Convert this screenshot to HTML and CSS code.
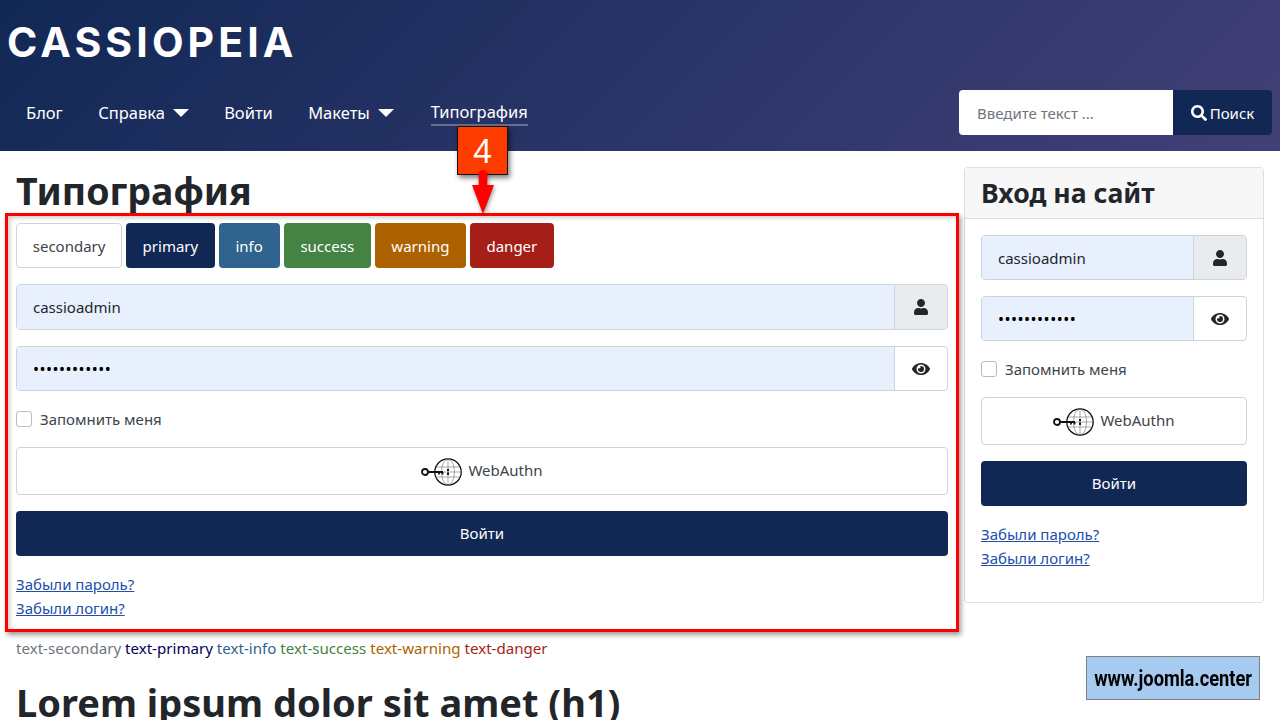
FILE: index.html
```html
<!DOCTYPE html>
<html lang="ru">
<head>
<meta charset="utf-8">
<title>Типография</title>
<link rel="stylesheet" href="styles.css">
</head>
<body>
<svg class="defs" width="0" height="0" aria-hidden="true">
  <symbol id="i-user" viewBox="0 0 448 512"><path d="M224 256c70.7 0 128-57.3 128-128S294.7 0 224 0 96 57.3 96 128s57.3 128 128 128zm89.6 32h-16.7c-22.2 10.2-46.9 16-72.9 16s-50.6-5.8-72.9-16h-16.7C60.2 288 0 348.2 0 422.4V464c0 26.5 21.5 48 48 48h352c26.5 0 48-21.5 48-48v-41.6c0-74.2-60.2-134.4-134.4-134.4z"/></symbol>
  <symbol id="i-eye" viewBox="0 0 576 512"><path d="M572.52 241.4C518.29 135.59 410.93 64 288 64S57.68 135.64 3.48 241.41a32.35 32.35 0 0 0 0 29.19C57.71 376.41 165.07 448 288 448s230.32-71.64 284.52-177.41a32.35 32.35 0 0 0 0-29.19zM288 400a144 144 0 1 1 144-144 143.93 143.93 0 0 1-144 144zm0-240a95.31 95.31 0 0 0-25.31 3.79 47.85 47.85 0 0 1-66.9 66.9A95.78 95.78 0 1 0 288 160z"/></symbol>
  <symbol id="i-key" viewBox="0 0 41 28">
    <g fill="none" stroke="#111">
      <circle cx="27" cy="14" r="13.2" stroke-width="1.300"/>
      <ellipse cx="27" cy="14" rx="6.500" ry="13" stroke-width=".5" stroke="#555"/>
      <path d="M27 1v26M15 9h24M15 19h24M14 14h26" stroke-width=".5" stroke="#555"/>
      <circle cx="4" cy="14" r="3" stroke-width="1.800"/>
      <path d="M7 14h15M18 14v2.500M21.500 14v2.500" stroke-width="1.800"/>
      <path d="M27 11v2M27 14.500v2.500" stroke-width="2"/>
    </g>
  </symbol>
</svg>

<header class="site-header">
  <div class="brand">CASSIOPEIA</div>
  <div class="nav-row">
    <nav class="nav">
      <a class="nav-link">Блог</a>
      <a class="nav-link">Справка<span class="caret"></span></a>
      <a class="nav-link">Войти</a>
      <a class="nav-link">Макеты<span class="caret"></span></a>
      <a class="nav-link nav-current">Типография</a>
    </nav>
    <form class="search">
      <div class="search-input">Введите текст ...</div>
      <div class="search-btn">
        <svg class="search-icon" viewBox="0 0 512 512"><path d="M505 442.7L405.3 343c-4.5-4.5-10.6-7-17-7H372c27.6-35.3 44-79.7 44-128C416 93.1 322.9 0 208 0S0 93.1 0 208s93.1 208 208 208c48.3 0 92.7-16.4 128-44v16.3c0 6.4 2.5 12.5 7 17l99.7 99.7c9.4 9.4 24.6 9.4 33.9 0l28.3-28.3c9.4-9.4 9.4-24.600.1-34zM208 336c-70.7 0-128-57.2-128-128 0-70.7 57.2-128 128-128 70.7 0 128 57.2 128 128 0 70.7-57.2 128-128 128z"/></svg>
        Поиск
      </div>
    </form>
  </div>
</header>

<main class="page">
  <section class="content">
    <h1 class="page-title">Типография</h1>
    <div class="demo">
      <div class="btn-row">
        <span class="chip chip-secondary">secondary</span>
        <span class="chip chip-primary">primary</span>
        <span class="chip chip-info">info</span>
        <span class="chip chip-success">success</span>
        <span class="chip chip-warning">warning</span>
        <span class="chip chip-danger">danger</span>
      </div>
      <div class="login">
        <div class="field field-tall">
          <div class="field-input">cassioadmin</div>
          <div class="field-addon addon-grey"><svg class="icon-user"><use href="#i-user"/></svg></div>
        </div>
        <div class="field">
          <div class="field-input field-dots">••••••••••••</div>
          <div class="field-addon"><svg class="icon-eye"><use href="#i-eye"/></svg></div>
        </div>
        <label class="remember"><span class="check"></span>Запомнить меня</label>
        <div class="webauthn"><svg class="icon-key"><use href="#i-key"/></svg><span class="webauthn-label">WebAuthn</span></div>
        <div class="submit">Войти</div>
        <div class="links">
          <a class="link">Забыли пароль?</a>
          <a class="link">Забыли логин?</a>
        </div>
      </div>
    </div>
    <p class="swatches">
      <span class="t-secondary">text-secondary</span>
      <span class="t-primary">text-primary</span>
      <span class="t-info">text-info</span>
      <span class="t-success">text-success</span>
      <span class="t-warning">text-warning</span>
      <span class="t-danger">text-danger</span>
    </p>
    <h1 class="lorem">Lorem ipsum dolor sit amet (h1)</h1>
  </section>

  <aside class="card">
    <h3 class="card-title">Вход на сайт</h3>
    <div class="card-body login">
      <div class="field">
        <div class="field-input">cassioadmin</div>
        <div class="field-addon addon-grey"><svg class="icon-user"><use href="#i-user"/></svg></div>
      </div>
      <div class="field">
        <div class="field-input field-dots">••••••••••••</div>
        <div class="field-addon"><svg class="icon-eye"><use href="#i-eye"/></svg></div>
      </div>
      <label class="remember"><span class="check"></span>Запомнить меня</label>
      <div class="webauthn"><svg class="icon-key"><use href="#i-key"/></svg><span class="webauthn-label">WebAuthn</span></div>
      <div class="submit">Войти</div>
      <div class="links">
        <a class="link">Забыли пароль?</a>
        <a class="link">Забыли логин?</a>
      </div>
    </div>
  </aside>
</main>

<div class="highlight"></div>
<div class="callout">4</div>
<svg class="callout-arrow" viewBox="0 0 22 44"><path d="M6.700 4.300a4.300 4.300 0 0 1 8.600 0V15H22L11 44 0 15h6.700z" fill="#f00"/></svg>
<div class="watermark"><span class="watermark-text">www.joomla.center</span></div>
</body>
</html>
```
FILE: styles.css
```css
* { box-sizing: border-box; }
html, body { margin: 0; height: 720px; overflow: hidden; }
body { font-family: "Noto Sans", "Open Sans", sans-serif; font-size: 15px; color: #22262a; background: #fff; position: relative; }
.defs { position: absolute; }

.site-header { height: 151px; padding: 17px 8px 16px; display: flex; flex-direction: column; color: #fff;
  background: linear-gradient(135deg, #112855 0%, #424077 100%); }
.brand { font-family: Inter, Lato, sans-serif; font-weight: 700; font-size: 41px; line-height: 50px; letter-spacing: 4.100px; margin-left: -1px; white-space: nowrap; }
.nav-row { display: flex; justify-content: space-between; align-items: center; margin-top: 23px; }
.nav { display: flex; gap: 35.300px; padding-left: 18px; font-size: 16.500px; }
.nav-link { display: flex; align-items: center; height: 27px; color: #fff; }
.nav-current { border-bottom: 2px solid rgba(255,255,255,.3); height: 27px; margin-left: 1.500px; }
.caret { width: 0; height: 0; margin-left: 8px; border: 8px solid transparent; border-top-color: #fff; border-bottom: 0; }
.search { display: flex; width: 313px; height: 45px; }
.search-input { flex: 1; background: #fff; border-radius: 4px 0 0 4px; padding-left: 18px; display: flex; align-items: center; color: #6d757e; }
.search-btn { width: 99px; background: #112855; border-radius: 0 4px 4px 0; display: flex; align-items: center; justify-content: center; gap: 3px; color: #fff; }
.search-icon { width: 16px; height: 16px; fill: #fff; }

.page { display: grid; grid-template-columns: 932px 300px; gap: 16px; padding: 16px 16px 0; }
.page-title { margin: 0 0 8px; font-size: 37.500px; line-height: 48px; font-weight: 700; height: 48px; }
.btn-row { display: flex; gap: 4px; margin-bottom: 16px; }
.chip { height: 45px; border-radius: 4px; display: flex; align-items: center; justify-content: center; color: #fff; padding: 0 16px; }
.chip-secondary { width: 106.200px; background: #fff; color: #3d444b; border: 1px solid #ced4da; }
.chip-primary { width: 88.400px; background: #112855; }
.chip-info { width: 61px; background: #30638d; }
.chip-success { width: 87.300px; background: #448344; }
.chip-warning { width: 91px; background: #ad6200; }
.chip-danger { width: 84px; background: #a51f18; }

.login { display: flex; flex-direction: column; }
.field { display: flex; height: 45px; margin-bottom: 16px; border: 1px solid #ced4da; border-radius: 4px; overflow: hidden; }
.field-tall { height: 46px; }
.field-input { flex: 1; background: #e8f0fe; padding-left: 16px; display: flex; align-items: center; color: #22262a; border-right: 1px solid #ced4da; }
.field-dots { color: #000; letter-spacing: .5px; font-size: 16px; }
.field-addon { width: 52px; display: flex; align-items: center; justify-content: center; }
.addon-grey { background: #e9ecef; }
.icon-user { width: 14px; height: 16px; fill: #22262a; }
.icon-eye { width: 18px; height: 16px; fill: #22262a; }
.remember { display: flex; align-items: center; gap: 8px; height: 16px; margin: 4px 0 20px; color: #3d444b; }
.check { width: 16px; height: 16px; border: 1px solid #bbb; border-radius: 3px; background: #fff; }
.webauthn { height: 48px; border: 1px solid #ced4da; border-radius: 4px; display: flex; align-items: center; justify-content: center; gap: 6px; color: #3d444b; margin-bottom: 16px; }
.webauthn-label { margin-bottom: 2px; }
.icon-key { width: 41px; height: 28px; margin-top: 2px; }
.submit { height: 45px; padding-bottom: 2px; background: #112855; color: #fff; border-radius: 4px; display: flex; align-items: center; justify-content: center; margin-bottom: 16px; }
.links { display: flex; flex-direction: column; align-items: flex-start; }
.link { color: #224faa; text-decoration: underline; line-height: 24px; }

.swatches { margin: 16px 0 0; line-height: 24px; font-size: 15.100px; }
.t-secondary { color: #6d757e; }
.t-primary { color: #010156; }
.t-info { color: #30638d; }
.t-success { color: #448344; }
.t-warning { color: #ad6200; }
.t-danger { color: #a51f18; }
.lorem { margin: 19px 0 0; font-size: 38px; line-height: 46px; font-weight: 700; white-space: nowrap; }

.card { border: 1px solid #dfdfdf; border-radius: 4px; height: 436px; }
.card-title { margin: 0; height: 51px; padding: 0 16px; background: #f7f7f7; border-bottom: 1px solid #dfdfdf; display: flex; align-items: center; font-size: 26.600px; font-weight: 700; }
.card-body { padding: 16px 16px 0; }

.highlight { position: absolute; left: 5px; top: 213px; width: 954px; height: 419px; border: 3px solid #f00; box-shadow: 2px 3px 5px rgba(0,0,0,.4), inset 2px 2px 4px rgba(0,0,0,.2); }
.callout { position: absolute; left: 457px; top: 126px; width: 51px; height: 49px; background: #ff3c00; border: 1.500px solid #111; color: #fff; font-size: 32px; display: flex; align-items: center; justify-content: center; box-shadow: 2px 3px 5px rgba(0,0,0,.5); }
.callout-arrow { position: absolute; left: 472px; top: 170px; width: 22px; height: 44px; filter: drop-shadow(1px 2px 2px rgba(0,0,0,.4)); }
.watermark { position: absolute; left: 1086px; top: 656px; width: 174px; height: 44px; background: #a6caf0; border: 1px solid #808080; display: flex; align-items: center; justify-content: center; color: #000; font-family: Roboto, sans-serif; font-weight: 700; font-size: 22px; white-space: nowrap; }
.watermark-text { display: block; transform: scaleX(.83); }
```
